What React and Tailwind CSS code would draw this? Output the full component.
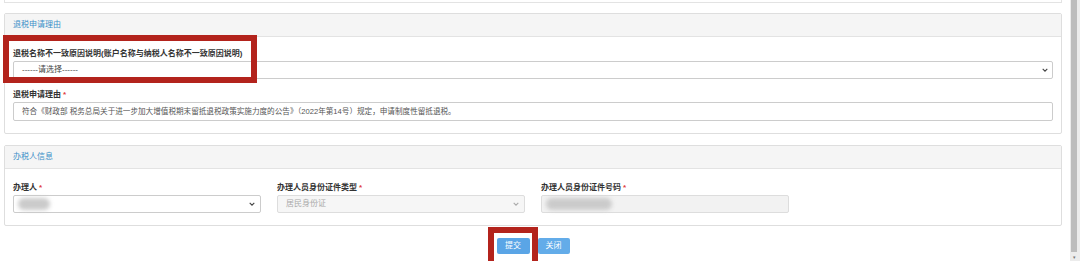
import React from 'react';

const font = { fontFamily: '"Liberation Sans", "Noto Sans CJK SC", sans-serif' };

const Chevron = ({ light }) => (
  <svg width="6" height="4" viewBox="0 0 6 4" className="shrink-0">
    <path d="M0.7 0.8 L3 3.2 L5.3 0.8" fill="none" stroke={light ? '#aaa' : '#444'} strokeWidth="1.1" />
  </svg>
);

const Label = ({ children, required }) => (
  <div className="text-[8px] leading-[10px] font-bold text-[#333] mb-[2px]">
    {children}
    {required && <span className="text-[#e04040] ml-[2px]">*</span>}
  </div>
);

const Panel = ({ title, children }) => (
  <div className="border border-[#dedede] rounded-[2px] bg-white">
    <div className="h-[23px] bg-[#f5f5f5] border-b border-[#e3e3e3] flex items-center pl-[8px] text-[8px] text-[#3a8fc8]">
      {title}
    </div>
    {children}
  </div>
);

const Blur = ({ w }) => (
  <div className={`h-[12px] ${w} rounded-full bg-[#cbcbcb] blur-[2px]`} />
);

export default function App() {
  return (
    <div className="relative w-[1080px] h-[261px] bg-white overflow-hidden flex" style={font}>
      <div className="w-[1066px] px-[4px]">
        <div className="h-[3px] border-x border-b border-[#e3e3e3]" />

        <div className="mt-[10px]">
          <Panel title="退税申请理由">
            <div className="px-[8px] pt-[12px] pb-[12px]">
              <Label>退税名称不一致原因说明(账户名称与纳税人名称不一致原因说明)</Label>
              <div className="h-[18px] border border-[#ccc] rounded-[2px] flex items-center justify-between pl-[8px] pr-[4px] text-[8px] text-[#444]">
                <span>------请选择------</span>
                <Chevron />
              </div>

              <div className="mt-[11px]">
                <Label required>退税申请理由</Label>
                <div className="h-[19px] border border-[#ccc] rounded-[2px] flex items-center pl-[8px] text-[7.6px] text-[#555]">
                  符合《财政部 税务总局关于进一步加大增值税期末留抵退税政策实施力度的公告》（2022年第14号）规定，申请制度性留抵退税。
                </div>
              </div>
            </div>
          </Panel>
        </div>

        <div className="mt-[11px]">
          <Panel title="办税人信息">
            <div className="px-[8px] pt-[14px] pb-[12px] grid grid-cols-4 gap-x-[16px]">
              <div>
                <Label required>办理人</Label>
                <div className="h-[18px] border border-[#ccc] rounded-[2px] flex items-center justify-between pl-[4px] pr-[5px]">
                  <Blur w="w-[32px]" />
                  <Chevron />
                </div>
              </div>
              <div>
                <Label required>办理人员身份证件类型</Label>
                <div className="h-[18px] border border-[#ddd] bg-[#f6f6f6] rounded-[2px] flex items-center justify-between pl-[8px] pr-[5px] text-[8px] text-[#aaa]">
                  <span>居民身份证</span>
                  <Chevron light />
                </div>
              </div>
              <div>
                <Label required>办理人员身份证件号码</Label>
                <div className="h-[18px] border border-[#ddd] bg-[#f2f2f2] rounded-[2px] flex items-center pl-[4px]">
                  <Blur w="w-[66px]" />
                </div>
              </div>
              <div />
            </div>
          </Panel>
        </div>

        <div className="mt-[12px] flex justify-center gap-[8px]">
          <button className="w-[33px] h-[16px] rounded-[2px] bg-[#5aa5e6] text-white text-[8px] leading-[16px]">提交</button>
          <button className="w-[32px] h-[16px] rounded-[2px] bg-[#63ace9] text-white text-[8px] leading-[16px]">关闭</button>
        </div>
      </div>

      <div className="ml-[4px] w-[10px] h-full bg-[#ececec] flex flex-col items-start">
        <div className="ml-[1px] w-[6px] h-[252px] bg-[#bdbdbd]" />
        <div className="ml-[3px] mt-[3px] text-[5px] leading-[5px] text-[#777]">▾</div>
      </div>

      <div className="absolute left-[3px] top-[35px] w-[254px] h-[48px] border-[6px] border-[#b3231c]" />
      <div className="absolute left-[488px] top-[227px] w-[50px] h-[40px] border-[6px] border-[#b3231c]" />
    </div>
  );
}
